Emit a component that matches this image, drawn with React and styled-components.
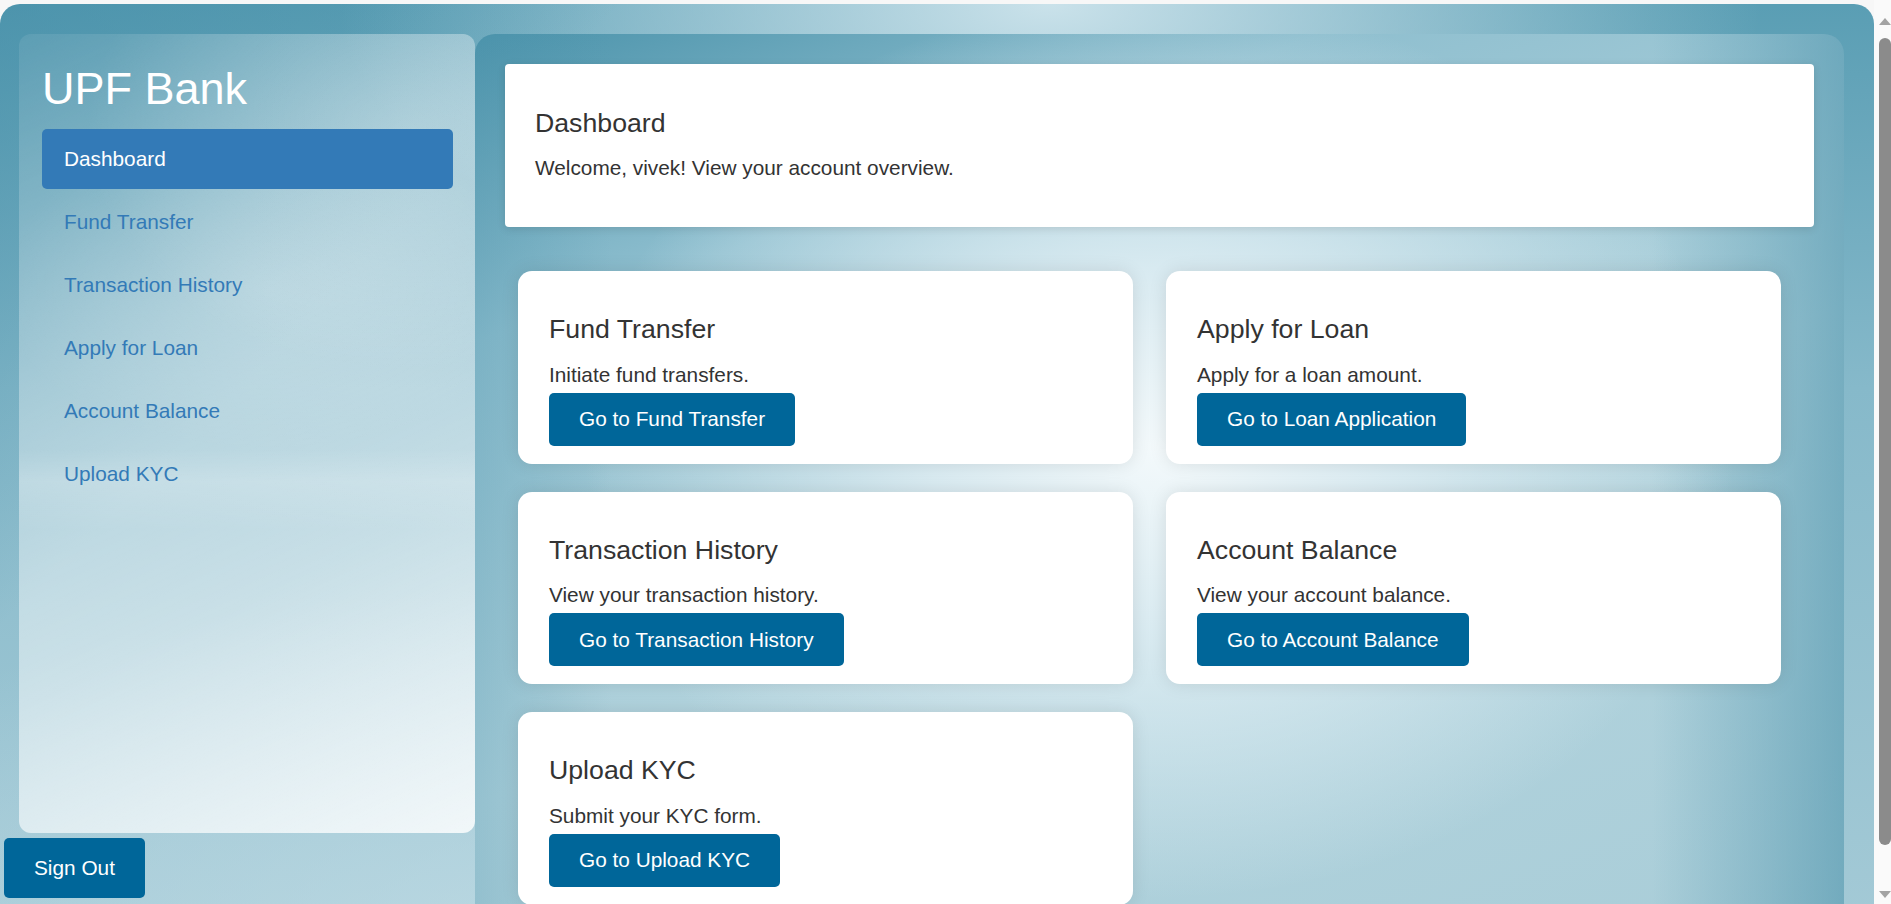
import React from "react";
import styled, { createGlobalStyle } from "styled-components";

const GlobalStyle = createGlobalStyle`
  body {
    margin: 0;
    background: #f7f7f7;
    font-family: "Liberation Sans", Arial, sans-serif;
    color: #333;
  }
`;

const navLinks = [
  "Dashboard",
  "Fund Transfer",
  "Transaction History",
  "Apply for Loan",
  "Account Balance",
  "Upload KYC",
];

const services = [
  { title: "Fund Transfer", text: "Initiate fund transfers.", action: "Go to Fund Transfer" },
  { title: "Apply for Loan", text: "Apply for a loan amount.", action: "Go to Loan Application" },
  { title: "Transaction History", text: "View your transaction history.", action: "Go to Transaction History" },
  { title: "Account Balance", text: "View your account balance.", action: "Go to Account Balance" },
  { title: "Upload KYC", text: "Submit your KYC form.", action: "Go to Upload KYC" },
];

const App = () => {
  return (
    <>
      <GlobalStyle />
      <Viewport>
        <Page>
          <LeftColumn>
            <Sidebar>
              <Brand>UPF Bank</Brand>
              <NavList>
                {navLinks.map((link, index) => (
                  <li key={link}>
                    <NavLink href="#" $active={index === 0}>
                      {link}
                    </NavLink>
                  </li>
                ))}
              </NavList>
            </Sidebar>
            <SignOutButton>Sign Out</SignOutButton>
          </LeftColumn>

          <Main>
            <HeaderCard>
              <PageTitle>Dashboard</PageTitle>
              <Lead>Welcome, vivek! View your account overview.</Lead>
            </HeaderCard>
            <CardGrid>
              {services.map((service) => (
                <Card key={service.title}>
                  <CardTitle>{service.title}</CardTitle>
                  <CardText>{service.text}</CardText>
                  <ActionButton>{service.action}</ActionButton>
                </Card>
              ))}
            </CardGrid>
          </Main>
        </Page>

        {/* window scrollbar as it shows in the capture */}
        <ScrollTrack>
          <ScrollArrow />
          <ScrollThumb />
          <ScrollArrow $down />
        </ScrollTrack>
      </Viewport>
    </>
  );
};

export default App;

const Viewport = styled.div`
  display: flex;
  align-items: flex-start;
`;

const Page = styled.div`
  flex: 1;
  min-width: 0;
  display: flex;
  align-items: flex-start;
  margin-top: 4px;
  padding: 30px 30px 30px 4px;
  border-radius: 20px;
  background:
    linear-gradient(135deg, rgba(66, 140, 166, 0.55) 0%, rgba(66, 140, 166, 0) 22%),
    radial-gradient(ellipse 38% 32% at 56% 0%, rgba(214, 233, 240, 0.9) 0%, rgba(214, 233, 240, 0) 100%),
    radial-gradient(ellipse 55% 40% at 35% 100%, rgba(196, 222, 231, 0.8) 0%, rgba(196, 222, 231, 0) 100%),
    linear-gradient(180deg, #5a9eb4 0%, #86b9ca 40%, #a6cbd7 100%);
`;

const ScrollTrack = styled.div`
  flex-shrink: 0;
  display: flex;
  flex-direction: column;
  width: 17px;
  height: 100vh;
  background: #fafafa;
`;

const ScrollArrow = styled.div`
  width: 0;
  height: 0;
  margin: ${({ $down }) => ($down ? "auto 0 6px 5px" : "18px 0 0 5px")};
  border-left: 6px solid transparent;
  border-right: 6px solid transparent;
  border-bottom: ${({ $down }) => ($down ? "none" : "7px solid #a3a3a3")};
  border-top: ${({ $down }) => ($down ? "7px solid #a3a3a3" : "none")};
`;

const ScrollThumb = styled.div`
  width: 12px;
  height: 807px;
  margin: 13px 0 0 5px;
  border-radius: 6px;
  background: #8b8b8b;
`;

const LeftColumn = styled.div`
  display: flex;
  flex-direction: column;
  align-items: flex-start;
  width: 471px;
  flex-shrink: 0;
`;

const Sidebar = styled.aside`
  box-sizing: border-box;
  margin-left: 15px;
  width: 456px;
  height: 799px;
  padding: 29px 22px 0 23px;
  border-radius: 12px;
  background:
    radial-gradient(ellipse 70% 30% at 85% 12%, rgba(255, 255, 255, 0.28) 0%, rgba(255, 255, 255, 0) 100%),
    radial-gradient(ellipse 60% 20% at 55% 32%, rgba(255, 255, 255, 0.2) 0%, rgba(255, 255, 255, 0) 100%),
    linear-gradient(180deg, rgba(255, 255, 255, 0) 52%, rgba(255, 255, 255, 0.16) 56%, rgba(255, 255, 255, 0) 62%),
    linear-gradient(
      155deg,
      rgba(255, 255, 255, 0.08) 0%,
      rgba(255, 255, 255, 0.34) 36%,
      rgba(255, 255, 255, 0.5) 66%,
      rgba(255, 255, 255, 0.82) 100%
    );
`;

const Brand = styled.h1`
  margin: 0 0 14px;
  font-size: 45px;
  line-height: 52px;
  font-weight: 400;
  color: #fff;
`;

const NavList = styled.ul`
  display: flex;
  flex-direction: column;
  gap: 3px;
  margin: 0;
  padding: 0;
  list-style: none;
`;

const NavLink = styled.a`
  display: flex;
  align-items: center;
  height: 60px;
  padding-left: 22px;
  border-radius: 5px;
  font-size: 20.8px;
  text-decoration: none;
  color: ${({ $active }) => ($active ? "#fff" : "#337ab7")};
  background: ${({ $active }) => ($active ? "#337ab7" : "transparent")};
`;

const SignOutButton = styled.button`
  margin-top: 5px;
  height: 60px;
  padding: 0 30px;
  border: none;
  border-radius: 5px;
  background: #006699;
  color: #fff;
  font-family: inherit;
  font-size: 20.8px;
  cursor: pointer;
`;

const Main = styled.main`
  flex: 1;
  padding: 30px;
  border-radius: 20px;
  background:
    radial-gradient(ellipse 42% 50% at 50% 46%, #f3f9fb 0%, rgba(221, 237, 243, 0.92) 40%, rgba(190, 218, 228, 0) 100%),
    linear-gradient(90deg, rgba(78, 148, 172, 0.3) 0%, rgba(78, 148, 172, 0) 10%, rgba(78, 148, 172, 0) 86%, rgba(78, 148, 172, 0.6) 100%),
    linear-gradient(160deg, #4b93ab 0%, #8fbfcf 22%, #b3d4de 55%, #a9cdd8 100%);
`;

const HeaderCard = styled.section`
  padding: 44px 30px 47px;
  border-radius: 4px;
  background: #fff;
  box-shadow: 0 2px 8px rgba(0, 0, 0, 0.12);
`;

const PageTitle = styled.h2`
  margin: 0 0 17px;
  font-size: 26.7px;
  line-height: 31px;
  font-weight: 400;
`;

const Lead = styled.p`
  margin: 0;
  font-size: 20.8px;
  line-height: 24px;
`;

const CardGrid = styled.div`
  display: grid;
  grid-template-columns: repeat(2, 615px);
  gap: 28px 33px;
  margin: 44px 0 0 13px;
`;

const Card = styled.div`
  padding: 43px 31px 18px;
  border-radius: 14px;
  background: #fff;
  box-shadow: 0 0 18px rgba(0, 0, 0, 0.1);
`;

const CardTitle = styled.h3`
  margin: 0 0 17.5px;
  font-size: 26.7px;
  line-height: 31px;
  font-weight: 400;
`;

const CardText = styled.p`
  margin: 0 0 6px;
  font-size: 20.8px;
  line-height: 24px;
`;

const ActionButton = styled.button`
  height: 53px;
  padding: 0 30px;
  border: none;
  border-radius: 5px;
  background: #006699;
  color: #fff;
  font-family: inherit;
  font-size: 20.8px;
  cursor: pointer;
`;
